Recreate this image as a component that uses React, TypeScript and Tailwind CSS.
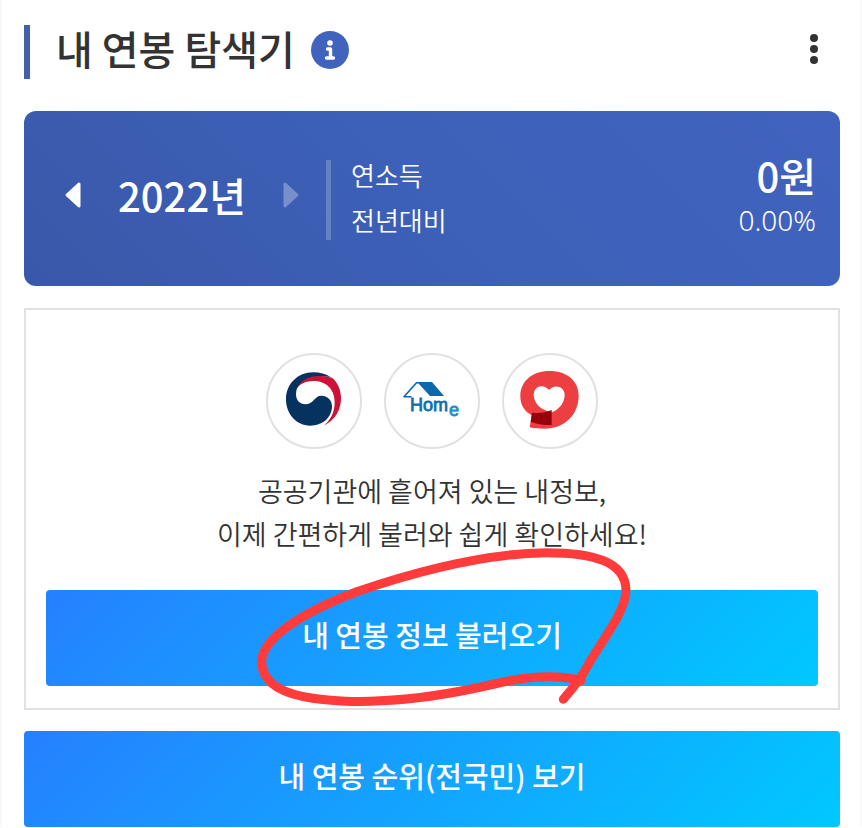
import React from "react";

const brandGradient =
  "bg-[linear-gradient(135deg,#2680ff_0%,#00c8ff_100%)]";

function GovernmentLogo() {
  return (
    <svg viewBox="-3 3 330 330" className="size-[110px] shrink-0" aria-label="정부24" role="img">
      <path
        d="M104 140C112 108 138 92 170 92C190 92 204 94 216 98C233 112 243 134 243 160C243 196 224 226 192 242C212 224 224 202 224 172C224 132 198 108 160 108C134 108 114 120 104 140Z"
        fill="#cc1236"
      />
      <path
        d="M213 97C198 87 179 82 160 82C112 82 78 118 78 163C78 208 110 242 150 242C190 242 216 216 216 184C216 165 202 152 184 152C164 152 160 178 136 178C119 178 108 165 108 148C108 116 136 95 172 93C188 92 203 94 213 97Z"
        fill="#063260"
      />
    </svg>
  );
}

function HometaxLogo() {
  return (
    <svg viewBox="0 0 110 110" className="size-[110px] shrink-0" aria-label="홈택스" role="img">
      <path d="M40 36H55L67 50H53L42 38Z" fill="#0b68ad" />
      <path d="M43 36.800H39.500L27 50.800H34.500" fill="none" stroke="#0b68ad" strokeWidth="1.600" strokeLinejoin="round" />
      <text x="33" y="65" fill="#0f6eb0" stroke="#0f6eb0" strokeWidth="0.8" fontSize="18" fontFamily="Liberation Sans, sans-serif">Hom</text>
      <text x="72" y="70" fill="#2490c4" stroke="#2490c4" strokeWidth="0.8" fontSize="18" fontFamily="Liberation Sans, sans-serif">e</text>
    </svg>
  );
}

function HealthLogo() {
  return (
    <svg viewBox="1 3 330 330" className="size-[110px] shrink-0" aria-label="국민건강보험" role="img">
      <path
        fillRule="evenodd"
        d="M165 78C217 78 252 108 252 152C252 208 210 251 150 251C134 251 118 250 105 247L111 211C88 199 77 178 77 154C77 108 113 78 165 78ZM163 135C152 120 130 120 121 134C111 152 121 176 140 190C151 197 164 202 172 202C195 192 210 172 210 150C210 124 180 116 163 135Z"
        fill="#ed3e41"
      />
      <path d="M112 203C132 206 152 203 171 195V240C150 241 128 237 108 230Z" fill="#98000c" />
    </svg>
  );
}

function LogoCircle({ children }: { children: React.ReactNode }) {
  return (
    <li className="flex size-24 items-center justify-center rounded-full border-2 border-[#e1e1e3]">
      {children}
    </li>
  );
}

export default function App() {
  return (
    <main className="border-x-2 border-[#f8f8f8] bg-white pt-[25px] pr-5 pl-[22px] font-['Noto_Sans_CJK_KR','Noto_Sans',sans-serif] text-[#333]">
      <header className="flex h-[54px] items-center border-l-6 border-[#4262a8] pl-[26px]">
        <h1 className="-mt-2 text-[40px] leading-[54px] font-medium">내 연봉 탐색기</h1>
        <button type="button" aria-label="안내" className="ml-4 -mt-1 size-10">
          <svg viewBox="0 0 40 40" className="size-10">
            <circle cx="19" cy="20" r="19" fill="#4163bd" />
            <circle cx="19" cy="13" r="2.8" fill="#fff" />
            <path d="M16.500 19H19.500V28M15.500 28H22.500" fill="none" stroke="#fff" strokeWidth="3.400" strokeLinecap="round" strokeLinejoin="round" />
          </svg>
        </button>
        <button type="button" aria-label="더보기" className="ml-auto -mt-1 h-10 w-[52px]">
          <svg viewBox="0 0 52 40" className="h-10 w-[52px]" fill="#333">
            <circle cx="26" cy="8" r="4" />
            <circle cx="26" cy="19" r="4" />
            <circle cx="26" cy="30" r="4" />
          </svg>
        </button>
      </header>

      <section className="mt-8 flex h-[175px] items-center rounded-xl bg-[linear-gradient(45deg,#3958a9,#3d60b8_50%,#4163bf)] pr-6 pl-10 text-white">
        <button type="button" aria-label="이전 연도" className="-mt-2">
          <svg viewBox="0 0 20 28" className="h-7 w-5">
            <path d="M15 3V25L3 14Z" fill="#fff" stroke="#fff" strokeWidth="3" strokeLinejoin="round" />
          </svg>
        </button>
        <strong className="-mt-2 ml-[34px] text-[40px] leading-[60px] font-medium">2022년</strong>
        <button type="button" aria-label="다음 연도" disabled className="-mt-2 ml-[34px]">
          <svg viewBox="0 0 20 28" className="h-7 w-5">
            <path d="M5 3V25L17 14Z" fill="#798fcd" stroke="#798fcd" strokeWidth="3" strokeLinejoin="round" />
          </svg>
        </button>
        <dl className="mt-0.5 ml-[26px] flex h-20 flex-1 flex-col gap-[15px] border-l-5 border-[#6580c5] pl-5">
          <div className="flex h-[30px] items-center justify-between">
            <dt className="text-[26px] font-[350]">연소득</dt>
            <dd className="text-[40px] leading-[30px] font-medium">0원</dd>
          </div>
          <div className="flex h-[30px] items-center justify-between">
            <dt className="text-[26px] font-[350]">전년대비</dt>
            <dd className="font-['Noto_Sans',sans-serif] text-[28px] font-light">0.00%</dd>
          </div>
        </dl>
      </section>

      <section className="mt-[22px] border-2 border-[#e1e1e3] px-5 pt-[43px] pb-[22px]">
        <ul className="flex justify-center gap-[22px]">
          <LogoCircle><GovernmentLogo /></LogoCircle>
          <LogoCircle><HometaxLogo /></LogoCircle>
          <LogoCircle><HealthLogo /></LogoCircle>
        </ul>
        <p className="mt-5 text-center text-[27px] leading-[43px] font-[350]">
          공공기관에 흩어져 있는 내정보,
          <br />
          이제 간편하게 불러와 쉽게 확인하세요!
        </p>
        <div className="relative mt-[35px]">
          <button type="button" className={`h-24 w-full rounded pb-1.5 text-[29px] font-medium text-white ${brandGradient}`}>
            내 연봉 정보 불러오기
          </button>
          <svg viewBox="0 0 1200 570" className="pointer-events-none absolute -top-[60px] left-1/2 -ml-48 h-[190px] w-[400px]" aria-hidden="true">
            <path
              d="M970 508C995 480 1010 460 1030 430C1070 350 1158 250 1158 180C1156 95 1060 68 920 68C740 70 540 120 350 185C190 245 65 325 65 395C65 455 120 485 190 500C270 516 370 516 420 512C540 508 640 490 750 465C850 440 940 430 1023 452"
              fill="none"
              stroke="#ff3b3b"
              strokeWidth="27"
              strokeLinecap="round"
              strokeLinejoin="round"
            />
          </svg>
        </div>
      </section>

      <button type="button" className={`mt-[21px] block h-24 w-full rounded pb-1.5 text-[29px] font-medium text-white ${brandGradient}`}>
        내 연봉 순위(전국민) 보기
      </button>
    </main>
  );
}
